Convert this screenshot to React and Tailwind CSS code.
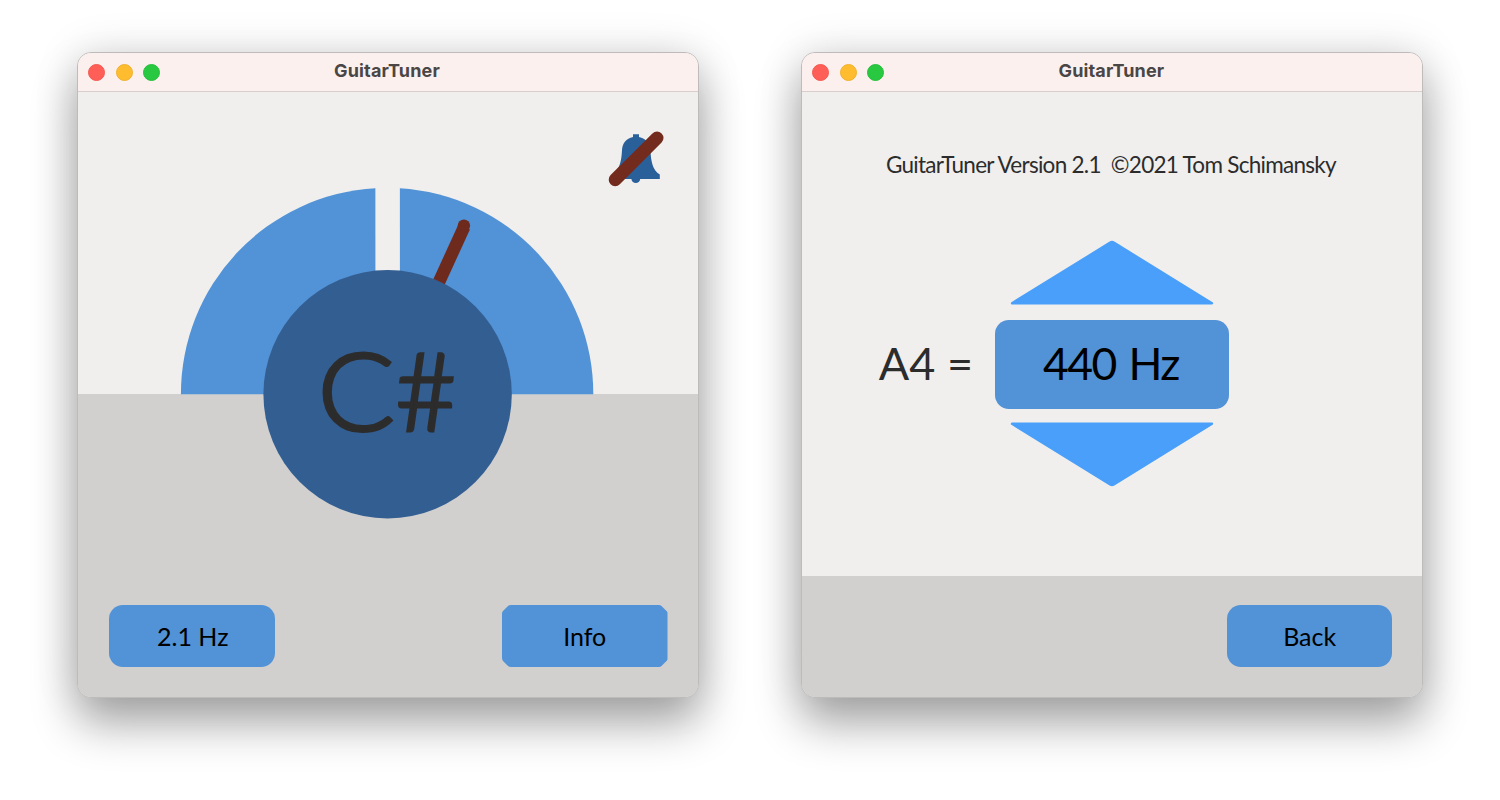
const FONT = "font-['Lato','Open_Sans',sans-serif]";

function Window({ children }) {
  return (
    <section className="flex h-[646px] w-[622px] flex-col overflow-hidden rounded-[14px] border border-[#bdbcbb] bg-[#f0efed] shadow-[0_26px_46px_rgba(0,0,0,0.33),0_0px_44px_rgba(0,0,0,0.13)]">
      <header className="grid h-[39px] shrink-0 grid-cols-[1fr_auto_1fr] items-center border-b border-[#d8cecd] bg-[#fcf0ef] pl-[10px]">
        <div className="flex gap-[10.5px]">
          <span className="size-[17px] rounded-full border border-[#f2584f] bg-[#ff5f57]" />
          <span className="size-[17px] rounded-full border border-[#efb02d] bg-[#febc2e]" />
          <span className="size-[17px] rounded-full border border-[#27be3d] bg-[#28c840]" />
        </div>
        <h1 className="pr-[12px] pb-[2px] font-['Inter',sans-serif] text-[18px] leading-none font-bold tracking-[0.15px] text-[#4a4645]">GuitarTuner</h1>
        <span />
      </header>
      {children}
    </section>
  );
}

function Dial() {
  return (
    <svg className="block h-[331px] w-[414px]" viewBox="180.1 188 414 331">
      <path d="M181 394.3A206.3 206.3 0 0 1 375.5 188.2V394.3Z" fill="#5292d6" />
      <path d="M400 188.2A206.3 206.3 0 0 1 593.4 394.3H400Z" fill="#5292d6" />
      <path d="M387.7 394.3L464.3 226.8" stroke="#6f2a1e" strokeWidth="12.6" />
      <circle cx="464" cy="225.6" r="6.2" fill="#6f2a1e" />
      <circle cx="387.7" cy="394.3" r="124.2" fill="#335e92" />
      <g fontSize="109" fontFamily="Lato, sans-serif" fontWeight="300" fill="#2c2c2c" stroke="#2c2c2c" strokeWidth="3.2" strokeLinejoin="miter">
        <text transform="translate(317.5 431.2) scale(1.05 1)">C</text>
        <text transform="translate(397 431.2) skewX(4)">#</text>
      </g>
    </svg>
  );
}

function MutedBell() {
  return (
    <svg className="h-[60px] w-[60px]" viewBox="606 128 60 60">
      <path d="M633 134.2H639V137C646 138.6 649.8 143 650.4 150C651 162 652.6 170 659.8 174.6V179H640.2C639.8 184.4 631.8 184.4 631.4 179H612V174.6C619.5 170 621.4 162 622 150C622.5 143 626 138.6 633 137Z" fill="#2a6099" />
      <path d="M615.2 179.7L657 138" stroke="#732b1e" strokeWidth="13" strokeLinecap="round" />
    </svg>
  );
}

function Button({ chamfered, children }) {
  const corners = chamfered
    ? "rounded-[9px] [clip-path:polygon(7px_0,calc(100%-7px)_0,100%_7px,100%_calc(100%-7px),calc(100%-7px)_100%,7px_100%,0_calc(100%-7px),0_7px)]"
    : "rounded-[14px]";
  return (
    <button className={`${FONT} ${corners} h-[62px] w-[165.5px] bg-[#5292d6] text-[25px] leading-none text-black`}>{children}</button>
  );
}

function Arrow({ down }) {
  return (
    <svg className={down ? "h-[66px] w-[206px] rotate-180" : "h-[66px] w-[206px]"} viewBox="0 0 206 66">
      <path d="M101.2 3.6Q103 2.4 104.8 3.6L203 64.2H3Z" fill="#499ff9" stroke="#499ff9" strokeWidth="2.4" strokeLinejoin="round" />
    </svg>
  );
}

export default function App() {
  return (
    <main className="flex h-[800px] w-[1500px] gap-[102.4px] overflow-hidden bg-white pt-[52px] pl-[77px]">
      <Window>
        <div className="relative flex flex-1 flex-col justify-end bg-[linear-gradient(to_bottom,#f0efed_302.5px,#d1d0ce_302.5px)] pb-[30px]">
          <div className="absolute top-[96px] left-[102px]"><Dial /></div>
          <div className="absolute top-[36px] left-[528px]"><MutedBell /></div>
          <div className="flex justify-between pr-[30.5px] pl-[31px]">
            <Button><span className="pl-[2px]">2.1 Hz</span></Button>
            <Button chamfered>Info</Button>
          </div>
        </div>
      </Window>
      <Window>
        <div className={`${FONT} flex h-[484px] shrink-0 flex-col items-center pt-[60px]`}>
          <p className="pr-[3px] text-[22.5px] leading-[26px] tracking-[-0.72px] whitespace-pre text-[#2c2c2c]">GuitarTuner Version 2.1  ©2021 Tom Schimansky</p>
          <div className="mt-[61px] grid grid-cols-[192.6px_234px_193.4px] items-center">
            <span />
            <div className="flex justify-center"><Arrow /></div>
            <span />
            <span className="pr-[22px] pb-px text-right text-[45px] leading-none text-[#2c2c2c]">A4 =</span>
            <div className="mt-[15px] mb-[13px] flex h-[89px] items-center justify-center rounded-[14px] bg-[#5292d6] pr-[2px] pb-[2px] text-[44.5px] leading-none tracking-[-1.6px] [word-spacing:3px] text-black">440 Hz</div>
            <span />
            <span />
            <div className="flex justify-center"><Arrow down /></div>
            <span />
          </div>
        </div>
        <div className="flex flex-1 items-end justify-end bg-[#d1d0ce] pr-[30px] pb-[30px]">
          <Button>Back</Button>
        </div>
      </Window>
    </main>
  );
}
